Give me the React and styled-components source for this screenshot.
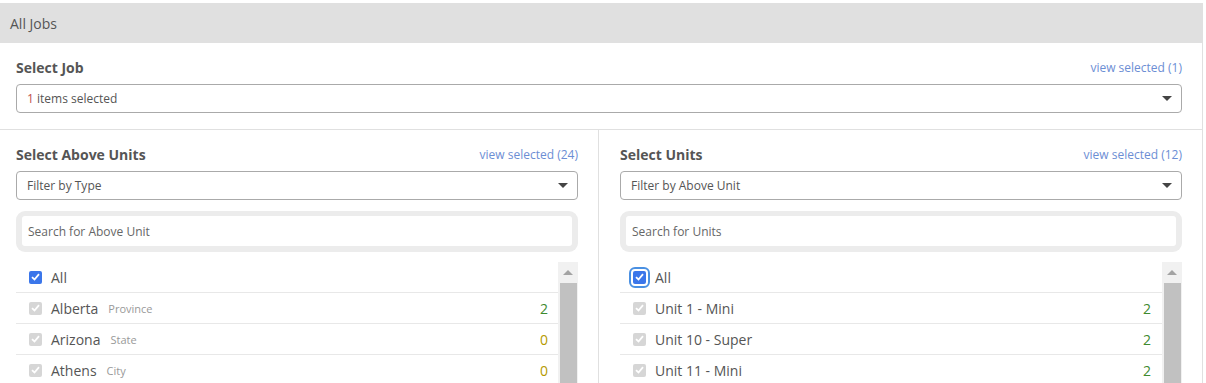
import React from "react";
import styled, { createGlobalStyle } from "styled-components";

const Global = createGlobalStyle`
  html, body { margin: 0; padding: 0; background: #fff; overflow: hidden; }
  body { font-family: "Open Sans", "Liberation Sans", sans-serif; color: #555; }
  * { box-sizing: border-box; }
`;

const Page = styled.div`
  width: 1203px;
  padding-top: 3px;
`;

const HeaderBar = styled.div`
  height: 40px;
  background: #e0e0e0;
  display: flex;
  align-items: center;
  padding-left: 10px;
  font-size: 14px;
  color: #555;
`;

const Body = styled.div`
  border-right: 1px solid #e0e0e0;
`;

const JobSection = styled.div`
  padding: 13px 20px 16px 16px;
  border-bottom: 1px solid #e0e0e0;
`;

const TitleRow = styled.div`
  display: flex;
  justify-content: space-between;
  align-items: center;
  height: 22px;
  margin-bottom: 6px;
`;

const Title = styled.div`
  font-size: 14px;
  font-weight: 700;
  color: #555;
`;

const ViewLink = styled.a`
  font-size: 12px;
  color: #6c8ed4;
  text-decoration: none;
`;

const SelectBox = styled.div`
  height: 29px;
  border: 1px solid #aaa;
  border-radius: 4px;
  display: flex;
  align-items: center;
  justify-content: space-between;
  padding: 0 9px 0 10px;
  font-size: 12px;
  color: #555;
`;

const Red = styled.span`
  color: #c0504d;
`;

const Caret = styled.span`
  width: 0;
  height: 0;
  border-left: 5px solid transparent;
  border-right: 5px solid transparent;
  border-top: 5px solid #444;
`;

const Columns = styled.div`
  display: grid;
  grid-template-columns: 598px 1fr;
`;

const Column = styled.div`
  padding: 13px 20px 0 ${(p) => p.$left}px;
  border-left: ${(p) => (p.$divider ? "1px solid #e0e0e0" : "none")};
`;

const SearchWrap = styled.div`
  margin-top: 11px;
  height: 41px;
  background: #ececec;
  border-radius: 9px;
  padding: 5px 6px;
`;

const SearchInput = styled.div`
  height: 30px;
  background: #fff;
  border-radius: 3px;
  display: flex;
  align-items: center;
  padding-left: 6px;
  font-size: 12px;
  color: #666;
`;

const ListArea = styled.div`
  margin-top: 10px;
  display: flex;
  height: 200px;
`;

const Rows = styled.div`
  flex: 1;
`;

const Row = styled.div`
  height: 31px;
  display: flex;
  align-items: center;
  border-bottom: 1px solid #e8e8e8;
  padding: 0 ${(p) => p.$pr}px 0 ${(p) => p.$pl}px;
`;

const Check = styled.span`
  width: 13px;
  height: 13px;
  border-radius: 2px;
  background: ${(p) => (p.$active ? "#3b76ea" : "#d6d6d6")};
  display: inline-flex;
  align-items: center;
  justify-content: center;
  flex: none;
  outline: ${(p) => (p.$focus ? "2px solid #4a90e2" : "none")};
  outline-offset: 2px;
`;

const Label = styled.span`
  margin-left: 9px;
  font-size: 14px;
  color: #555;
`;

const Sub = styled.span`
  margin-left: 10px;
  font-size: 11px;
  color: #999;
`;

const Count = styled.span`
  margin-left: auto;
  font-size: 14px;
  color: ${(p) => (p.$zero ? "#b59a00" : "#3e8a2e")};
`;

const Scrollbar = styled.div`
  width: 20px;
  flex: none;
  background: #f1f1f1;
  display: flex;
  flex-direction: column;
`;

const ScrollUp = styled.div`
  height: 21px;
  display: flex;
  align-items: center;
  justify-content: center;
`;

const UpTri = styled.span`
  width: 0;
  height: 0;
  border-left: 5px solid transparent;
  border-right: 5px solid transparent;
  border-bottom: 5px solid #a3a3a3;
`;

const Thumb = styled.div`
  margin: 0 1px 0 2px;
  flex: 1;
  background: #c1c1c1;
`;

const Tick = () => (
  <svg width="9" height="8" viewBox="0 0 9 8">
    <path d="M1 4.2 L3.5 6.5 L8 1.2" fill="none" stroke="#fff" strokeWidth="1.8" />
  </svg>
);

const Panel = ({ left, divider, title, count, filter, search, items, focus, pl, pr }) => (
  <Column $left={left} $divider={divider}>
    <TitleRow>
      <Title>{title}</Title>
      <ViewLink>view selected ({count})</ViewLink>
    </TitleRow>
    <SelectBox>
      <span>{filter}</span>
      <Caret />
    </SelectBox>
    <SearchWrap>
      <SearchInput>{search}</SearchInput>
    </SearchWrap>
    <ListArea>
      <Rows>
        <Row $pl={pl} $pr={pr}>
          <Check $active $focus={focus}>
            <Tick />
          </Check>
          <Label>All</Label>
        </Row>
        {items.map((it) => (
          <Row key={it.name} $pl={pl} $pr={pr}>
            <Check>
              <Tick />
            </Check>
            <Label>{it.name}</Label>
            {it.sub && <Sub>{it.sub}</Sub>}
            <Count $zero={it.n === 0}>{it.n}</Count>
          </Row>
        ))}
      </Rows>
      <Scrollbar>
        <ScrollUp>
          <UpTri />
        </ScrollUp>
        <Thumb />
      </Scrollbar>
    </ListArea>
  </Column>
);

export default function App() {
  return (
    <Page>
      <Global />
      <HeaderBar>All Jobs</HeaderBar>
      <Body>
        <JobSection>
          <TitleRow>
            <Title>Select Job</Title>
            <ViewLink>view selected (1)</ViewLink>
          </TitleRow>
          <SelectBox>
            <span>
              <Red>1</Red> items selected
            </span>
            <Caret />
          </SelectBox>
        </JobSection>
        <Columns>
          <Panel
            left={16}
            title="Select Above Units"
            count={24}
            filter="Filter by Type"
            search="Search for Above Unit"
            pl={13}
            pr={10}
            items={[
              { name: "Alberta", sub: "Province", n: 2 },
              { name: "Arizona", sub: "State", n: 0 },
              { name: "Athens", sub: "City", n: 0 },
            ]}
          />
          <Panel
            left={21}
            divider
            title="Select Units"
            count={12}
            filter="Filter by Above Unit"
            search="Search for Units"
            pl={13}
            pr={11}
            focus
            items={[
              { name: "Unit 1 - Mini", n: 2 },
              { name: "Unit 10 - Super", n: 2 },
              { name: "Unit 11 - Mini", n: 2 },
            ]}
          />
        </Columns>
      </Body>
    </Page>
  );
}
